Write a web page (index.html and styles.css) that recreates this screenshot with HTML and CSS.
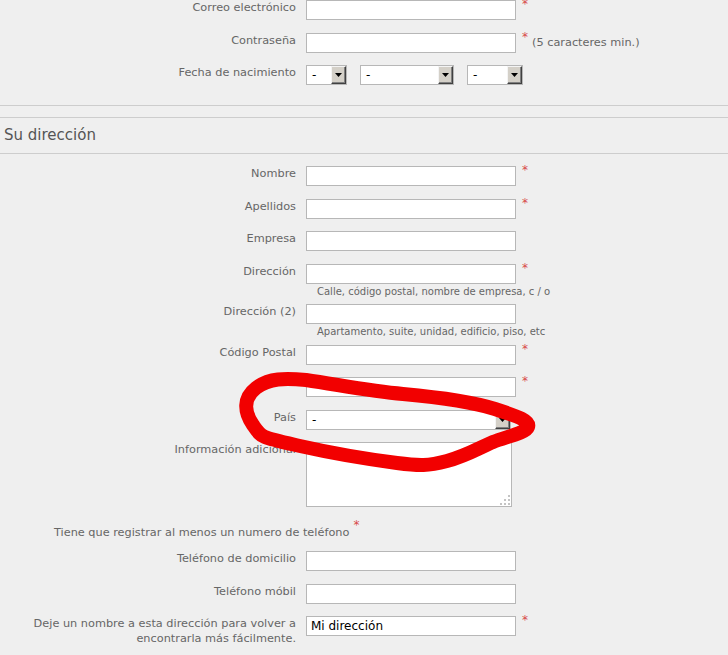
FILE: index.html
```html
<!DOCTYPE html>
<html lang="es">
<head>
<meta charset="utf-8">
<title>Registro</title>
<link rel="stylesheet" href="styles.css">
</head>
<body>
<main class="page">
  <section class="account">
    <div class="row">
      <label class="lbl" for="email">Correo electrónico</label>
      <input class="text" id="email" type="text">
      <span class="req">*</span>
    </div>
    <div class="row">
      <label class="lbl" for="pass">Contraseña</label>
      <input class="text" id="pass" type="password">
      <span class="req">*</span>
      <span class="note">(5 caracteres min.)</span>
    </div>
    <div class="row">
      <span class="lbl">Fecha de nacimiento</span>
      <div class="selects">
        <div class="select select--day"><span class="select-val">-</span><span class="select-btn"><svg width="7" height="4" viewBox="0 0 7 4"><path d="M0 0H7L3.5 4Z" fill="#000"/></svg></span></div>
        <div class="select select--month"><span class="select-val">-</span><span class="select-btn"><svg width="7" height="4" viewBox="0 0 7 4"><path d="M0 0H7L3.5 4Z" fill="#000"/></svg></span></div>
        <div class="select select--year"><span class="select-val">-</span><span class="select-btn"><svg width="7" height="4" viewBox="0 0 7 4"><path d="M0 0H7L3.5 4Z" fill="#000"/></svg></span></div>
      </div>
    </div>
  </section>

  <h2 class="section-title">Su dirección</h2>

  <section class="address">
    <div class="row">
      <label class="lbl" for="nombre">Nombre</label>
      <input class="text" id="nombre" type="text">
      <span class="req">*</span>
    </div>
    <div class="row">
      <label class="lbl" for="apellidos">Apellidos</label>
      <input class="text" id="apellidos" type="text">
      <span class="req">*</span>
    </div>
    <div class="row">
      <label class="lbl" for="empresa">Empresa</label>
      <input class="text" id="empresa" type="text">
    </div>
    <div class="row row--hint">
      <label class="lbl" for="dir1">Dirección</label>
      <div class="control">
        <input class="text" id="dir1" type="text">
        <span class="hint">Calle, código postal, nombre de empresa, c / o</span>
      </div>
      <span class="req">*</span>
    </div>
    <div class="row row--hint">
      <label class="lbl" for="dir2">Dirección (2)</label>
      <div class="control">
        <input class="text" id="dir2" type="text">
        <span class="hint">Apartamento, suite, unidad, edificio, piso, etc</span>
      </div>
    </div>
    <div class="row">
      <label class="lbl" for="cp">Código Postal</label>
      <input class="text" id="cp" type="text">
      <span class="req">*</span>
    </div>
    <div class="row">
      <span class="lbl"></span>
      <input class="text" id="ciudad" type="text">
      <span class="req">*</span>
    </div>
    <div class="row">
      <span class="lbl">País</span>
      <div class="select select--country"><span class="select-val">-</span><span class="select-btn"><svg width="7" height="4" viewBox="0 0 7 4"><path d="M0 0H7L3.5 4Z" fill="#000"/></svg></span></div>
    </div>
    <div class="row">
      <label class="lbl" for="info">Información adicional</label>
      <div class="area">
        <textarea class="area-input" id="info"></textarea>
        <svg class="grip" width="10" height="10" viewBox="0 0 10 10">
          <rect x="8" y="0" width="2" height="2" fill="#c4c4c4"/>
          <rect x="4" y="4" width="2" height="2" fill="#c4c4c4"/>
          <rect x="8" y="4" width="2" height="2" fill="#c4c4c4"/>
          <rect x="0" y="8" width="2" height="2" fill="#c4c4c4"/>
          <rect x="4" y="8" width="2" height="2" fill="#c4c4c4"/>
          <rect x="8" y="8" width="2" height="2" fill="#c4c4c4"/>
        </svg>
      </div>
    </div>

    <p class="phone-note">Tiene que registrar al menos un numero de teléfono<span class="req req--inline">*</span></p>

    <div class="row">
      <label class="lbl" for="tel1">Teléfono de domicilio</label>
      <input class="text" id="tel1" type="text">
    </div>
    <div class="row">
      <label class="lbl" for="tel2">Teléfono móbil</label>
      <input class="text" id="tel2" type="text">
    </div>
    <div class="row">
      <label class="lbl" for="alias">Deje un nombre a esta dirección para volver a encontrarla más fácilmente.</label>
      <input class="text" id="alias" type="text" value="Mi dirección">
      <span class="req">*</span>
    </div>
  </section>

  <svg class="annotation" width="728" height="655" viewBox="0 0 728 655">
    <path d="M306 380 C340 385 370 391 403 394 S470 401 495 409 S530 421 528 427 S505 437 493 442 S466 456 447 461 S420 466 397 463 S340 455 300 446 S262 438 253 425 S243 398 256 388 S285 378 306 380 Z" fill="none" stroke="#f20000" stroke-width="14" stroke-linejoin="round" stroke-linecap="round"/>
  </svg>
</main>
</body>
</html>
```

FILE: styles.css
```css
* {
  box-sizing: border-box;
}

html,
body {
  margin: 0;
  padding: 0;
}

body {
  background: #efefef;
  font-family: "DejaVu Sans", Verdana, sans-serif;
  font-size: 11.3px;
  line-height: 15px;
  color: #666;
}

.page {
  position: relative;
  width: 728px;
  height: 655px;
  overflow: hidden;
}

.account {
  padding-bottom: 20px;
  border-bottom: 1px solid #cdcdcd;
}

.row {
  display: flex;
  align-items: flex-start;
  margin-bottom: 12.5px;
}

.row:last-child {
  margin-bottom: 0;
}

.row--hint {
  margin-bottom: 6.5px;
}

.lbl {
  flex: 0 0 296px;
  margin-right: 10px;
  text-align: right;
}

.text {
  display: block;
  width: 210px;
  height: 20px;
  margin: 0;
  padding: 0 4px;
  border: 1px solid #b7b7b7;
  background: #fff;
  font-family: "DejaVu Sans", Verdana, sans-serif;
  font-size: 12px;
  color: #000;
  outline: none;
}

.req {
  margin: -2px 0 0 6px;
  font-size: 12px;
  line-height: 12px;
  color: #d84a4a;
}

.req--inline {
  margin: 0 0 0 4px;
  line-height: 0;
  vertical-align: 7px;
}

.note {
  margin: 2px 0 0 4px;
}

.control {
  display: flex;
  flex-direction: column;
  width: 210px;
}

.hint {
  margin-top: 2px;
  padding-left: 11px;
  font-size: 10px;
  line-height: 12px;
  white-space: nowrap;
}

.selects {
  display: flex;
  gap: 13px;
}

.select {
  display: flex;
  align-items: stretch;
  justify-content: space-between;
  height: 20px;
  border: 1px solid #b7b7b7;
  background: #fff;
  color: #000;
  font-size: 12px;
}

.select--day {
  width: 41px;
}

.select--month {
  width: 94px;
}

.select--year {
  width: 56px;
}

.select--country {
  width: 205px;
}

.select-val {
  padding-left: 5px;
  line-height: 18px;
}

.select-btn {
  display: flex;
  align-items: center;
  justify-content: center;
  width: 15px;
  background: #d4d0c8;
  border: 1px solid;
  border-color: #f4f4f4 #404040 #404040 #f4f4f4;
  box-shadow: inset -1px -1px 0 #808080;
}

.area {
  position: relative;
  width: 206px;
  height: 65px;
}

.area-input {
  display: block;
  width: 100%;
  height: 100%;
  margin: 0;
  border: 1px solid #b7b7b7;
  background: #fff;
  resize: none;
  outline: none;
}

.grip {
  position: absolute;
  right: 2px;
  bottom: 2px;
}

.phone-note {
  margin: 18px 0 11px;
  padding-left: 54px;
}

.section-title {
  margin: 11px 0 0;
  padding: 0 0 0 4px;
  border-top: 1px solid #cdcdcd;
  border-bottom: 1px solid #cdcdcd;
  font-size: 15px;
  font-weight: normal;
  line-height: 35px;
  color: #555;
}

.address {
  padding-top: 12px;
}

.annotation {
  position: absolute;
  top: 0;
  left: 0;
  pointer-events: none;
}
```
